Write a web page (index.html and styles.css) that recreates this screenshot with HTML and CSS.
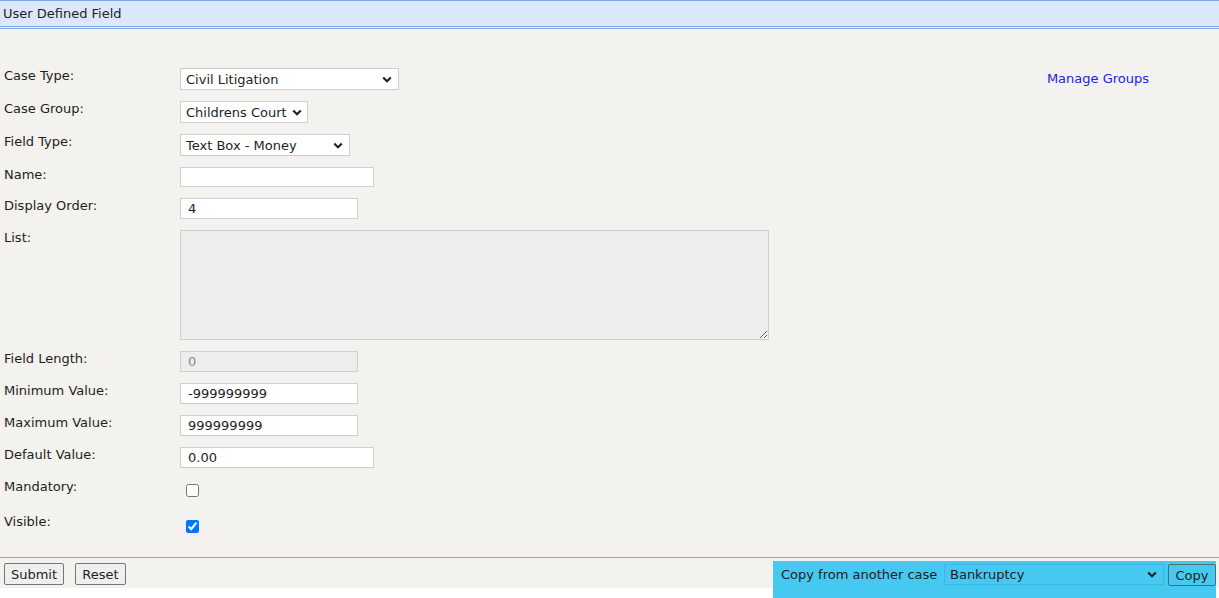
FILE: index.html
```html
<!DOCTYPE html>
<html>
<head>
<meta charset="utf-8">
<title>User Defined Field</title>
<link rel="stylesheet" href="styles.css">
</head>
<body>
<div class="page">
  <div class="header">User Defined Field</div>
  <div class="header-rule"></div>
  <div class="form">
    <div class="row">
      <div class="label">Case Type:</div>
      <div class="field">
        <select class="sel sel-case"><option>Civil Litigation</option></select>
      </div>
      <a class="manage" href="#">Manage Groups</a>
    </div>
    <div class="row">
      <div class="label">Case Group:</div>
      <div class="field">
        <select class="sel sel-group"><option>Childrens Court</option></select>
      </div>
    </div>
    <div class="row">
      <div class="label">Field Type:</div>
      <div class="field">
        <select class="sel sel-type"><option>Text Box - Money</option></select>
      </div>
    </div>
    <div class="row">
      <div class="label">Name:</div>
      <div class="field"><input class="txt txt-wide txt-name" type="text" value=""></div>
    </div>
    <div class="row">
      <div class="label">Display Order:</div>
      <div class="field"><input class="txt txt-narrow" type="text" value="4"></div>
    </div>
    <div class="row">
      <div class="label">List:</div>
      <div class="field"><textarea class="list"></textarea></div>
    </div>
    <div class="row">
      <div class="label">Field Length:</div>
      <div class="field"><input class="txt txt-narrow txt-disabled" type="text" value="0" disabled></div>
    </div>
    <div class="row">
      <div class="label">Minimum Value:</div>
      <div class="field"><input class="txt txt-narrow" type="text" value="-999999999"></div>
    </div>
    <div class="row">
      <div class="label">Maximum Value:</div>
      <div class="field"><input class="txt txt-narrow" type="text" value="999999999"></div>
    </div>
    <div class="row">
      <div class="label">Default Value:</div>
      <div class="field"><input class="txt txt-wide" type="text" value="0.00"></div>
    </div>
    <div class="row row-check">
      <div class="label">Mandatory:</div>
      <div class="field"><input class="chk chk-mand" type="checkbox"></div>
    </div>
    <div class="row row-check">
      <div class="label">Visible:</div>
      <div class="field"><input class="chk chk-vis" type="checkbox" checked></div>
    </div>
  </div>
  <div class="footer">
    <div class="actions">
      <button class="btn btn-submit" type="button">Submit</button>
      <button class="btn btn-reset" type="button">Reset</button>
    </div>
    <div class="copybox">
      <span class="copy-label">Copy from another case</span>
      <select class="sel-copy"><option>Bankruptcy</option></select>
      <button class="btn-copy" type="button">Copy</button>
    </div>
  </div>
</div>
</body>
</html>
```
FILE: styles.css
```css
html, body {
  margin: 0;
  padding: 0;
  background: #ffffff;
}
body {
  font-family: "DejaVu Sans", Verdana, sans-serif;
  font-size: 13px;
  color: #1e1e1e;
  overflow: hidden;
}
.page {
  background: #f3f2ee;
}
.header {
  background: #dbe8fb;
  border-top: 1px solid #7ea8e6;
  border-bottom: 1px solid #7ea8e6;
  height: 25px;
  line-height: 25px;
  padding-left: 3px;
  font-size: 13px;
}
.header-rule {
  margin-top: 1px;
  border-top: 1px solid #7ea8e6;
}
.form {
  padding-top: 39px;
  padding-bottom: 19px;
}
.row {
  display: flex;
  align-items: flex-start;
  margin-bottom: 11px;
}
.row:last-child {
  margin-bottom: 0;
}
.label {
  width: 176px;
  padding-left: 4px;
  line-height: 16px;
  flex: none;
  font-size: 13px;
}
.field {
  flex: none;
}
.manage {
  margin-left: auto;
  margin-right: 70px;
  margin-top: 3px;
  color: #2222ee;
  text-decoration: none;
  font-size: 13px;
  line-height: 16px;
}
.sel, .sel-copy {
  -webkit-appearance: none;
  appearance: none;
  background-image: url("data:image/svg+xml,%3Csvg xmlns='http://www.w3.org/2000/svg' width='10' height='7' viewBox='0 0 10 7'%3E%3Cpath d='M1.2 1.4L5 5.2L8.8 1.4' fill='none' stroke='%23202020' stroke-width='2.1'/%3E%3C/svg%3E");
  background-repeat: no-repeat;
  background-position: right 6px center;
  background-size: 10px 7px;
}
.sel {
  font-family: inherit;
  font-size: 13px;
  height: 22px;
  border: 1px solid #cfcfcf;
  border-radius: 0;
  background-color: #ffffff;
  color: #1e1e1e;
  padding: 0 20px 0 5px;
  margin: 0;
  box-sizing: border-box;
}
.sel-case { width: 219px; }
.sel-group { width: 128px; padding-right: 14px; background-position: right 5px center; }
.sel-type { width: 170px; }
.txt {
  font-family: inherit;
  font-size: 13px;
  height: 21px;
  border: 1px solid #cfcfcf;
  border-radius: 0;
  background: #ffffff;
  color: #1e1e1e;
  padding: 0 7px;
  margin: 0;
  box-sizing: border-box;
  outline: none;
}
.txt-name { height: 20px; }
.txt-wide { width: 194px; }
.txt-narrow { width: 178px; }
.txt-disabled {
  background: #ededed;
  color: #8a8a8a;
}
.list {
  display: block;
  width: 589px;
  height: 110px;
  box-sizing: border-box;
  background: #ededed;
  border: 1px solid #cfcfcf;
  border-radius: 0;
  margin: 0;
  padding: 2px;
  font-family: inherit;
  font-size: 13px;
}
.row-check {
  height: 24px;
}
.chk {
  width: 13px;
  height: 13px;
  margin: 5px 0 0 6px;
  accent-color: #0075ff;
}
.chk-vis {
  margin-top: 6px;
}
.footer {
  border-top: 1px solid #7ea8e6;
  display: flex;
  align-items: flex-start;
  justify-content: space-between;
  background: linear-gradient(#f3f2ee 0, #f3f2ee 30px, #ffffff 30px, #ffffff 100%);
}
.actions {
  display: flex;
  gap: 11px;
  padding-left: 4px;
  padding-top: 5px;
}
.btn {
  font-family: inherit;
  font-size: 13px;
  height: 22px;
  border: 1px solid #767676;
  border-radius: 2px;
  background: #efefef;
  color: #1e1e1e;
  padding: 0;
  margin: 0;
}
.btn-submit { width: 60px; }
.btn-reset { width: 51px; }
.copybox {
  margin-top: 3px;
  margin-right: 3px;
  width: 443px;
  height: 40px;
  box-sizing: border-box;
  background: #45c9f1;
  display: flex;
  align-items: flex-start;
  padding: 3px 0 0 8px;
}
.copy-label {
  font-size: 13px;
  line-height: 16px;
  margin-top: 3px;
  width: 163px;
  flex: none;
}
.sel-copy {
  font-family: inherit;
  font-size: 13px;
  width: 220px;
  height: 21px;
  box-sizing: border-box;
  border: 1px solid #3cb9dd;
  background-color: #45c9f1;
  color: #1e1e1e;
  border-radius: 0;
  padding: 0 20px 0 5px;
  margin: 0;
}
.btn-copy {
  font-family: inherit;
  font-size: 13px;
  width: 48px;
  height: 22px;
  margin-left: 4px;
  border: 1px solid #4d6b73;
  border-radius: 2px;
  background: #45c9f1;
  color: #1e1e1e;
  padding: 0;
}
```
